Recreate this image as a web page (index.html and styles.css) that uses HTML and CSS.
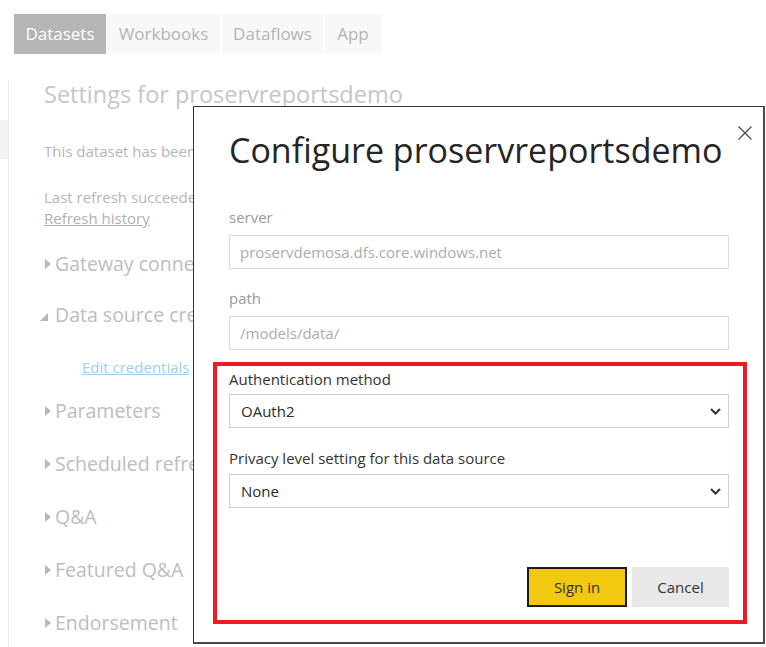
FILE: index.html
```html
<!DOCTYPE html>
<html lang="en">
<head>
<meta charset="utf-8">
<title>Configure proservreportsdemo</title>
<link rel="stylesheet" href="styles.css">
</head>
<body>
<div class="page">
  <nav class="tabs">
    <div class="tab tab-active tab-datasets">Datasets</div>
    <div class="tab tab-workbooks">Workbooks</div>
    <div class="tab tab-dataflows">Dataflows</div>
    <div class="tab tab-app">App</div>
  </nav>

  <div class="body">
    <div class="leftnav"><div class="navblock"></div></div>
    <main class="main">
      <h1 class="settings-title">Settings for proservreportsdemo</h1>
      <p class="info clip">This dataset has been</p>
      <p class="info info-2 clip">Last refresh succeeded<br><a class="history">Refresh history</a></p>

      <div class="sec sec-first clip"><span class="tri"></span>Gateway connection</div>
      <div class="sec sec-open clip"><span class="tri-open"></span>Data source credentials</div>
      <a class="edit-link clip">Edit credentials</a>
      <div class="sec sec-params clip"><span class="tri"></span>Parameters</div>
      <div class="sec clip"><span class="tri"></span>Scheduled refresh</div>
      <div class="sec clip"><span class="tri"></span>Q&amp;A</div>
      <div class="sec clip"><span class="tri"></span>Featured Q&amp;A</div>
      <div class="sec clip"><span class="tri"></span>Endorsement</div>
    </main>
  </div>

  <section class="dialog">
    <button class="close" aria-label="Close">
      <svg width="14" height="14" viewBox="0 0 14 14"><path d="M0.5 0.5 L13.5 13.5 M13.5 0.5 L0.5 13.5" stroke="#4a4a4a" stroke-width="1.2" fill="none"/></svg>
    </button>
    <h2 class="dlg-title">Configure proservreportsdemo</h2>

    <div class="lbl lbl-muted lbl-server">server</div>
    <div class="input">proservdemosa.dfs.core.windows.net</div>
    <div class="lbl lbl-muted lbl-path">path</div>
    <div class="input">/models/data/</div>

    <div class="highlight">
      <div class="lbl lbl-auth">Authentication method</div>
      <div class="select"><span>OAuth2</span>
        <svg class="chev" width="11" height="7" viewBox="0 0 11 7"><path d="M1 1 L5.5 5.5 L10 1" stroke="#333" stroke-width="2" fill="none"/></svg>
      </div>
      <div class="lbl lbl-privacy">Privacy level setting for this data source</div>
      <div class="select"><span>None</span>
        <svg class="chev" width="11" height="7" viewBox="0 0 11 7"><path d="M1 1 L5.5 5.5 L10 1" stroke="#333" stroke-width="2" fill="none"/></svg>
      </div>
      <div class="actions">
        <button class="btn btn-primary">Sign in</button>
        <button class="btn btn-secondary">Cancel</button>
      </div>
    </div>
  </section>
</div>
</body>
</html>
```
FILE: styles.css
```css
* { box-sizing: border-box; }
html, body { margin: 0; padding: 0; background: #fff; }
body { font-family: "Segoe UI", "Open Sans", "Noto Sans", sans-serif; }

.page {
  position: relative;
  width: 766px;
  height: 647px;
  overflow: hidden;
  background: #fff;
}

/* Tabs */
.tabs {
  display: flex;
  gap: 1px;
  padding: 14px 0 0 14px;
}
.tab {
  height: 40px;
  line-height: 40px;
  font-size: 17px;
  text-align: center;
  background: #f8f8f8;
  color: #b4b4b4;
  white-space: nowrap;
}
.tab-active { background: #b5b5b5; color: #fff; }
.tab-datasets { width: 92px; }
.tab-workbooks { width: 113px; }
.tab-dataflows { width: 101px; margin-left: 1px; }
.tab-app { width: 58px; }

/* Background settings page */
.body {
  display: flex;
  margin-top: 26px;
  height: 567px;
}
.leftnav {
  flex: none;
  width: 8px;
  padding-top: 40px;
}
.navblock {
  height: 39px;
  background: #f3f3f3;
}
.main {
  flex: 1;
  border-left: 1px solid #ececec;
  padding-left: 35px;
  white-space: nowrap;
}
.clip {
  width: 149px;
  overflow: hidden;
}
.settings-title {
  margin: 0;
  font-size: 23.5px;
  font-weight: 400;
  line-height: 28px;
  color: #c6c6c6;
}
.info {
  margin: 33px 0 0;
  font-size: 15px;
  line-height: 21px;
  color: #b6b6b6;
}
.info-2 { margin-top: 25px; }
.history { color: #b0b0b0; text-decoration: underline; }

.sec {
  display: flex;
  align-items: center;
  margin-top: 25px;
  font-size: 19.5px;
  line-height: 28px;
  color: #bdbdbd;
}
.sec-first { margin-top: 21px; }
.sec-open { margin-top: 23px; margin-left: -4px; width: 153px; }
.sec-params { margin-top: 19px; }
.tri {
  flex: none;
  width: 0;
  height: 0;
  margin: 0 4px 0 1px;
  border-left: 6px solid #b8b8b8;
  border-top: 5px solid transparent;
  border-bottom: 5px solid transparent;
}
.tri-open {
  flex: none;
  width: 0;
  height: 0;
  margin: 4px 7px 0 0;
  border-bottom: 8px solid #b8b8b8;
  border-left: 8px solid transparent;
}
.edit-link {
  display: block;
  margin: 28px 0 0 38px;
  width: 111px;
  font-size: 15px;
  line-height: 21px;
  color: #9fcdee;
  text-decoration: underline;
}

/* Dialog */
.dialog {
  position: absolute;
  left: 193px;
  top: 106px;
  width: 572px;
  height: 538px;
  background: #fff;
  border: 1px solid #333;
  border-right: 2px solid #4a4a4a;
  border-bottom: 2px solid #4a4a4a;
  padding: 19px 34px 0 35px;
}
.close {
  position: absolute;
  right: 11px;
  top: 19px;
  padding: 0;
  border: 0;
  background: none;
  line-height: 0;
}
.dlg-title {
  margin: 0;
  font-size: 34px;
  font-weight: 400;
  line-height: 48px;
  color: #252525;
  white-space: nowrap;
}
.lbl {
  font-size: 15px;
  line-height: 20px;
  color: #333;
  margin-bottom: 8px;
  white-space: nowrap;
}
.lbl-muted { color: #9a9a9a; }
.lbl-server { margin-top: 33px; }
.lbl-path { margin-top: 19px; }
.input {
  height: 34px;
  border: 1px solid #dcdcdc;
  padding-left: 10px;
  font-size: 15px;
  line-height: 32px;
  color: #acacac;
}

.highlight {
  margin: 12px -18px 0 -16px;
  border: 4px solid #ed1c24;
  padding: 3px 14px 13px 12px;
}
.lbl-auth { margin-bottom: 5px; }
.lbl-privacy { margin-top: 20px; margin-bottom: 6px; }
.select {
  display: flex;
  align-items: center;
  justify-content: space-between;
  height: 34px;
  border: 1px solid #cfcfcf;
  padding: 0 7px 0 11px;
  font-size: 15px;
  color: #2a2a2a;
}
.chev { display: block; }

.actions {
  display: flex;
  justify-content: flex-end;
  gap: 5px;
  margin-top: 59px;
}
.btn {
  height: 40px;
  font-family: inherit;
  font-size: 15px;
  color: #333;
  padding: 0;
}
.btn-primary {
  width: 100px;
  background: #f2c811;
  border: 2px solid #1c1c1c;
}
.btn-secondary {
  width: 97px;
  background: #e8e8e8;
  border: 0;
}
```
